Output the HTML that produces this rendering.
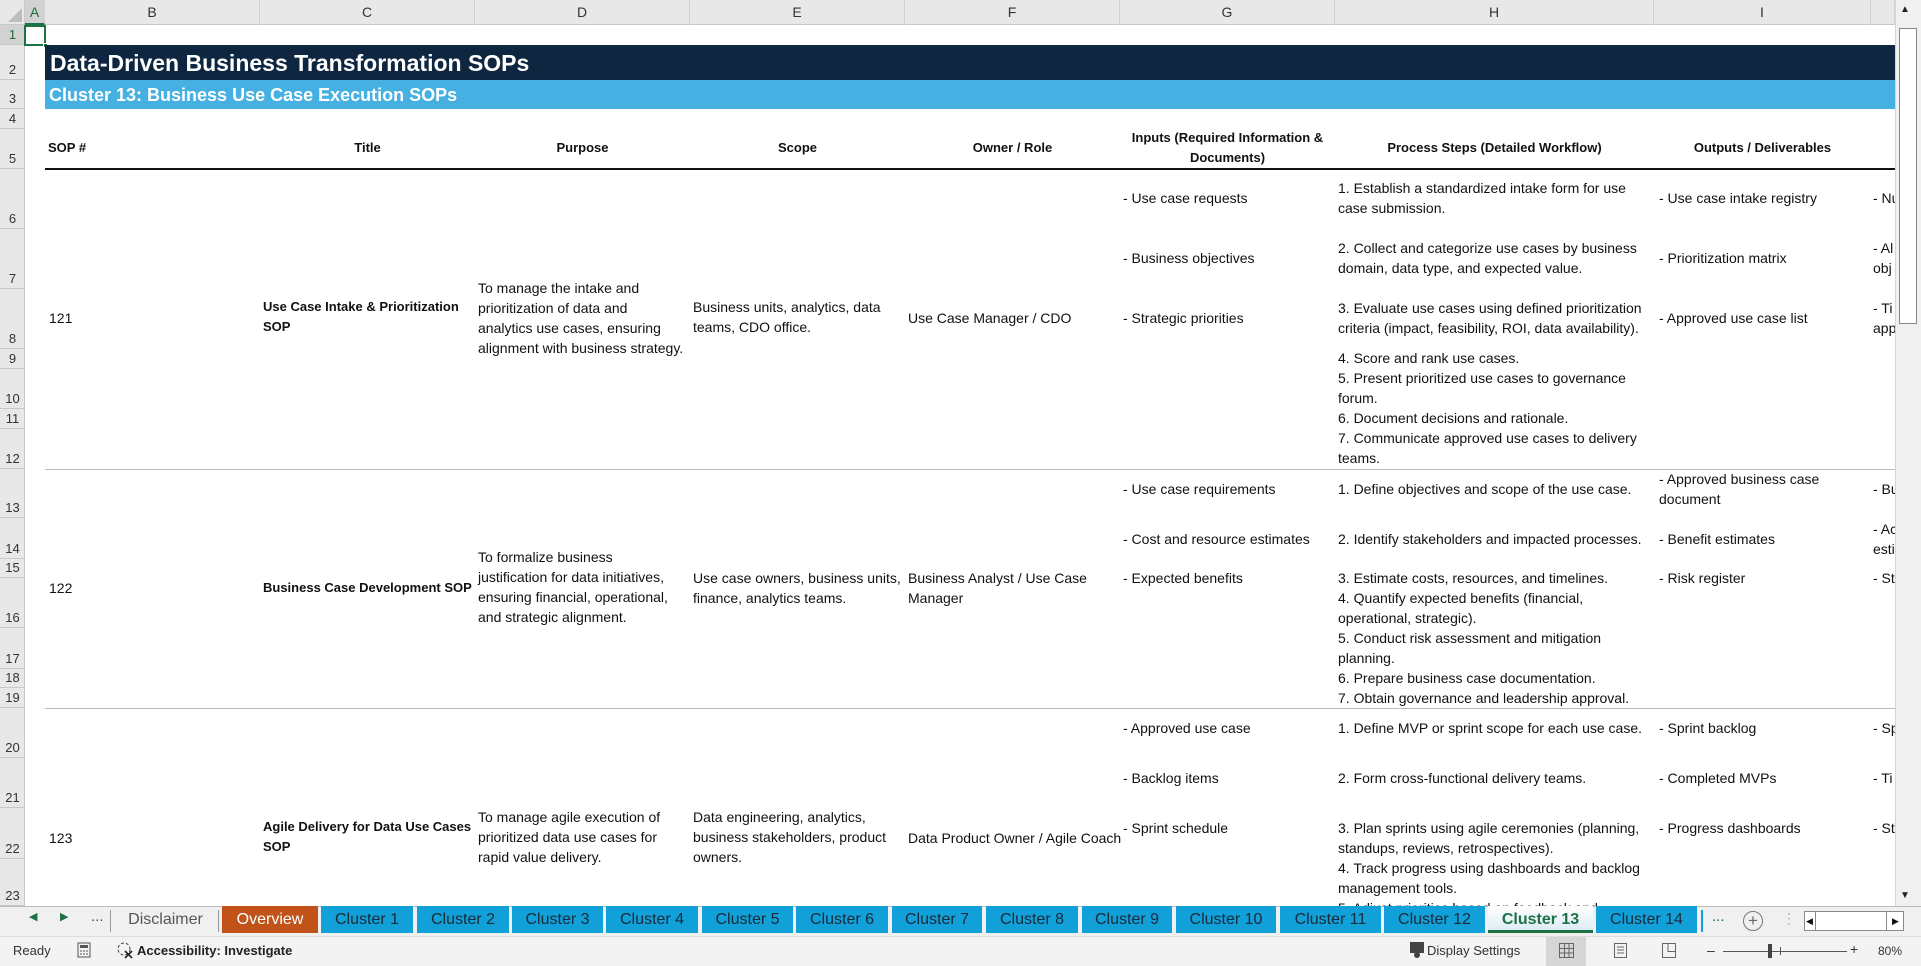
<!DOCTYPE html>
<html><head><meta charset="utf-8"><style>
*{margin:0;padding:0;box-sizing:border-box}
body{width:1921px;height:966px;overflow:hidden;background:#fff;position:relative;font-family:"Liberation Sans Narrow","Liberation Sans",sans-serif;color:#111}
.a{position:absolute;white-space:nowrap}
.t{position:absolute;white-space:nowrap;font-size:14px;line-height:20px}
.b{font-weight:bold;font-size:13px}
.ch{position:absolute;top:0;height:25px;line-height:25px;text-align:center;font-size:14px;color:#333;border-right:1px solid #d0d0d0}
.rh{position:absolute;left:0;width:25px;text-align:center;font-size:13px;color:#333;border-bottom:1px solid #c8c8c8;display:flex;align-items:flex-end;justify-content:center;padding-bottom:2px}
.hd{position:absolute;top:138px;font-weight:bold;font-size:13px;line-height:20px;text-align:center}
.tab{position:absolute;top:906px;height:27px;line-height:27px;text-align:center;font-size:16px;background:#12a0d8;color:#1b2a3a}
</style></head><body>
<div class="a" style="left:0;top:0;width:1895px;height:25px;background:#e8e8e8;border-bottom:1px solid #c8c8c8"></div>
<div class="a" style="left:0;top:0;width:25px;height:25px;border-right:1px solid #c8c8c8"></div>
<svg class="a" style="left:8px;top:8px" width="14" height="14"><polygon points="14,0 14,14 0,14" fill="#bdbdbd"/></svg>
<div class="ch" style="left:25px;width:20px;color:#1e6b3a;background:#d2d2d2;border-bottom:2px solid #1e7145">A</div>
<div class="ch" style="left:45px;width:215px">B</div>
<div class="ch" style="left:260px;width:215px">C</div>
<div class="ch" style="left:475px;width:215px">D</div>
<div class="ch" style="left:690px;width:215px">E</div>
<div class="ch" style="left:905px;width:215px">F</div>
<div class="ch" style="left:1120px;width:215px">G</div>
<div class="ch" style="left:1335px;width:319px">H</div>
<div class="ch" style="left:1654px;width:217px">I</div>
<div class="ch" style="left:1871px;width:24px"></div>
<div class="a" style="left:0;top:25px;width:25px;height:881px;background:#e8e8e8;border-right:1px solid #c8c8c8"></div>
<div class="rh" style="top:25px;height:20px;background:#d2d2d2;color:#1e6b3a">1</div>
<div class="rh" style="top:45px;height:35px">2</div>
<div class="rh" style="top:80px;height:29px">3</div>
<div class="rh" style="top:109px;height:20px">4</div>
<div class="rh" style="top:129px;height:40px">5</div>
<div class="rh" style="top:169px;height:60px">6</div>
<div class="rh" style="top:229px;height:60px">7</div>
<div class="rh" style="top:289px;height:60px">8</div>
<div class="rh" style="top:349px;height:20px">9</div>
<div class="rh" style="top:369px;height:40px">10</div>
<div class="rh" style="top:409px;height:20px">11</div>
<div class="rh" style="top:429px;height:40px">12</div>
<div class="rh" style="top:469px;height:49px">13</div>
<div class="rh" style="top:518px;height:41px">14</div>
<div class="rh" style="top:559px;height:19px">15</div>
<div class="rh" style="top:578px;height:50px">16</div>
<div class="rh" style="top:628px;height:41px">17</div>
<div class="rh" style="top:669px;height:19px">18</div>
<div class="rh" style="top:688px;height:20px">19</div>
<div class="rh" style="top:708px;height:50px">20</div>
<div class="rh" style="top:758px;height:50px">21</div>
<div class="rh" style="top:808px;height:51px">22</div>
<div class="rh" style="top:859px;height:47px">23</div>
<div class="a" style="left:24px;top:25px;width:22px;height:21px;border:2px solid #1e7145"></div>
<div class="a" style="left:43px;top:43px;width:5px;height:5px;background:#1e7145;border:1px solid #fff"></div>
<div class="a" style="left:45px;top:45px;width:1850px;height:35px;background:#0f2640"></div>
<div class="a" style="left:50px;top:48px;font-size:23px;font-weight:bold;line-height:30px;color:#fff">Data-Driven Business Transformation SOPs</div>
<div class="a" style="left:45px;top:80px;width:1850px;height:29px;background:#45b0e1"></div>
<div class="a" style="left:49px;top:83px;font-size:18px;font-weight:bold;line-height:24px;color:#fff">Cluster 13: Business Use Case Execution SOPs</div>
<div class="hd" style="left:48px;top:138px">SOP #</div>
<div class="hd" style="left:260px;width:215px">Title</div>
<div class="hd" style="left:475px;width:215px">Purpose</div>
<div class="hd" style="left:690px;width:215px">Scope</div>
<div class="hd" style="left:905px;width:215px">Owner / Role</div>
<div class="hd" style="left:1120px;width:215px;top:128px;white-space:normal">Inputs (Required Information &amp; Documents)</div>
<div class="hd" style="left:1335px;width:319px">Process Steps (Detailed Workflow)</div>
<div class="hd" style="left:1654px;width:217px">Outputs / Deliverables</div>
<div class="a" style="left:45px;top:168px;width:1850px;height:2px;background:#111"></div>
<div class="a" style="left:45px;top:469px;width:1850px;height:1px;background:#bbb"></div>
<div class="a" style="left:45px;top:708px;width:1850px;height:1px;background:#bbb"></div>
<div class="t" style="left:49px;top:308px">121</div>
<div class="t b" style="left:263px;top:297px">Use Case Intake &amp; Prioritization<br>SOP</div>
<div class="t" style="left:478px;top:278px">To manage the intake and<br>prioritization of data and<br>analytics use cases, ensuring<br>alignment with business strategy.</div>
<div class="t" style="left:693px;top:297px">Business units, analytics, data<br>teams, CDO office.</div>
<div class="t" style="left:908px;top:308px">Use Case Manager / CDO</div>
<div class="t" style="left:1123px;top:188px">- Use case requests</div>
<div class="t" style="left:1123px;top:248px">- Business objectives</div>
<div class="t" style="left:1123px;top:308px">- Strategic priorities</div>
<div class="t" style="left:1338px;top:178px">1. Establish a standardized intake form for use<br>case submission.</div>
<div class="t" style="left:1338px;top:238px">2. Collect and categorize use cases by business<br>domain, data type, and expected value.</div>
<div class="t" style="left:1338px;top:298px">3. Evaluate use cases using defined prioritization<br>criteria (impact, feasibility, ROI, data availability).</div>
<div class="t" style="left:1338px;top:348px">4. Score and rank use cases.<br>5. Present prioritized use cases to governance<br>forum.<br>6. Document decisions and rationale.<br>7. Communicate approved use cases to delivery<br>teams.</div>
<div class="t" style="left:1659px;top:188px">- Use case intake registry</div>
<div class="t" style="left:1659px;top:248px">- Prioritization matrix</div>
<div class="t" style="left:1659px;top:308px">- Approved use case list</div>
<div class="t" style="left:49px;top:578px">122</div>
<div class="t b" style="left:263px;top:578px">Business Case Development SOP</div>
<div class="t" style="left:478px;top:547px">To formalize business<br>justification for data initiatives,<br>ensuring financial, operational,<br>and strategic alignment.</div>
<div class="t" style="left:693px;top:568px">Use case owners, business units,<br>finance, analytics teams.</div>
<div class="t" style="left:908px;top:568px">Business Analyst / Use Case<br>Manager</div>
<div class="t" style="left:1123px;top:479px">- Use case requirements</div>
<div class="t" style="left:1123px;top:529px">- Cost and resource estimates</div>
<div class="t" style="left:1123px;top:568px">- Expected benefits</div>
<div class="t" style="left:1338px;top:479px">1. Define objectives and scope of the use case.</div>
<div class="t" style="left:1338px;top:529px">2. Identify stakeholders and impacted processes.</div>
<div class="t" style="left:1338px;top:568px">3. Estimate costs, resources, and timelines.<br>4. Quantify expected benefits (financial,<br>operational, strategic).<br>5. Conduct risk assessment and mitigation<br>planning.<br>6. Prepare business case documentation.<br>7. Obtain governance and leadership approval.</div>
<div class="t" style="left:1659px;top:469px">- Approved business case<br>document</div>
<div class="t" style="left:1659px;top:529px">- Benefit estimates</div>
<div class="t" style="left:1659px;top:568px">- Risk register</div>
<div class="t" style="left:49px;top:828px">123</div>
<div class="t b" style="left:263px;top:817px">Agile Delivery for Data Use Cases<br>SOP</div>
<div class="t" style="left:478px;top:807px">To manage agile execution of<br>prioritized data use cases for<br>rapid value delivery.</div>
<div class="t" style="left:693px;top:807px">Data engineering, analytics,<br>business stakeholders, product<br>owners.</div>
<div class="t" style="left:908px;top:828px">Data Product Owner / Agile Coach</div>
<div class="t" style="left:1123px;top:718px">- Approved use case</div>
<div class="t" style="left:1123px;top:768px">- Backlog items</div>
<div class="t" style="left:1123px;top:818px">- Sprint schedule</div>
<div class="t" style="left:1338px;top:718px">1. Define MVP or sprint scope for each use case.</div>
<div class="t" style="left:1338px;top:768px">2. Form cross-functional delivery teams.</div>
<div class="a" style="left:1338px;top:818px;width:320px;height:88px;overflow:hidden"><div class="t" style="left:0;top:0">3. Plan sprints using agile ceremonies (planning,<br>standups, reviews, retrospectives).<br>4. Track progress using dashboards and backlog<br>management tools.<br>5. Adjust priorities based on feedback and</div></div>
<div class="t" style="left:1659px;top:718px">- Sprint backlog</div>
<div class="t" style="left:1659px;top:768px">- Completed MVPs</div>
<div class="t" style="left:1659px;top:818px">- Progress dashboards</div>
<div class="a" style="left:1871px;top:169px;width:24px;height:737px;overflow:hidden">
<div class="t" style="left:2px;top:19px">- Nu</div>
<div class="t" style="left:2px;top:69px">- Al<br>obj</div>
<div class="t" style="left:2px;top:129px">- Ti<br>app</div>
<div class="t" style="left:2px;top:310px">- Bu</div>
<div class="t" style="left:2px;top:350px">- Ac<br>esti</div>
<div class="t" style="left:2px;top:399px">- Sta</div>
<div class="t" style="left:2px;top:549px">- Sp</div>
<div class="t" style="left:2px;top:599px">- Ti</div>
<div class="t" style="left:2px;top:649px">- Sta</div>
</div>
<div class="a" style="left:1895px;top:0;width:26px;height:906px;background:#f0f0f0;border-left:1px solid #d6d6d6"></div>
<div class="a" style="left:1899px;top:28px;width:18px;height:296px;background:#fff;border:1px solid #888"></div>
<div class="a" style="left:1900px;top:4px;font-size:10px;color:#222">▲</div>
<div class="a" style="left:1900px;top:890px;font-size:10px;color:#222">▼</div>
<div class="a" style="left:0;top:906px;width:1921px;height:30px;background:#f0f0f0;border-top:1px solid #bbb"></div>
<div class="a" style="left:29px;top:910px;font-size:11px;color:#1e7145">◀</div>
<div class="a" style="left:60px;top:910px;font-size:11px;color:#1e7145">▶</div>
<div class="a" style="left:91px;top:908px;font-size:15px;color:#1e7145">...</div>
<div class="a" style="left:110px;top:910px;width:1px;height:22px;background:#999"></div>
<div class="tab" style="left:117px;width:97px;background:transparent;color:#555">Disclaimer</div>
<div class="a" style="left:218px;top:910px;width:1px;height:22px;background:#999"></div>
<div class="tab" style="left:222px;width:96px;background:#c0521a;color:#fff">Overview</div>
<div class="tab" style="left:321px;width:92px">Cluster 1</div>
<div class="tab" style="left:417px;width:92px">Cluster 2</div>
<div class="tab" style="left:512px;width:91px">Cluster 3</div>
<div class="tab" style="left:606px;width:92px">Cluster 4</div>
<div class="tab" style="left:702px;width:91px">Cluster 5</div>
<div class="tab" style="left:796px;width:92px">Cluster 6</div>
<div class="tab" style="left:892px;width:90px">Cluster 7</div>
<div class="tab" style="left:986px;width:92px">Cluster 8</div>
<div class="tab" style="left:1082px;width:90px">Cluster 9</div>
<div class="tab" style="left:1176px;width:100px">Cluster 10</div>
<div class="tab" style="left:1280px;width:101px">Cluster 11</div>
<div class="tab" style="left:1384px;width:101px">Cluster 12</div>
<div class="tab" style="left:1488px;width:105px;font-weight:bold;background:linear-gradient(#fff,#dcecf4);color:#1e7145;border-bottom:3px solid #1e7145">Cluster 13</div>
<div class="tab" style="left:1596px;width:101px">Cluster 14</div>
<div class="a" style="left:1701px;top:910px;width:2px;height:22px;background:#12a0d8"></div>
<div class="a" style="left:1712px;top:908px;font-size:15px;color:#1e7145">...</div>
<div class="a" style="left:1743px;top:911px;width:20px;height:20px;border:1px solid #777;border-radius:50%;text-align:center;line-height:18px;font-size:17px;color:#666">+</div>
<div class="a" style="left:1782px;top:910px;font-size:14px;color:#aaa">⋮</div>
<div class="a" style="left:1804px;top:911px;width:100px;height:20px;background:#fff;border:1px solid #888"></div>
<div class="a" style="left:1804px;top:911px;width:12px;height:20px;border-right:1px solid #888;font-size:9px;line-height:20px;text-align:center">◀</div>
<div class="a" style="left:1886px;top:911px;width:18px;height:20px;border-left:1px solid #888;font-size:9px;line-height:20px;text-align:center">▶</div>
<div class="a" style="left:0;top:936px;width:1921px;height:30px;background:#f3f3f3;border-top:1px solid #ddd"></div>
<div class="a" style="left:13px;top:943px;font-size:13px;color:#333">Ready</div>
<svg class="a" style="left:77px;top:942px" width="14" height="16"><rect x="1" y="1" width="12" height="14" fill="none" stroke="#555"/><rect x="3" y="3" width="8" height="3" fill="#555"/><path d="M3 9h2M6 9h2M9 9h2M3 12h2M6 12h2M9 12h2" stroke="#555"/></svg>
<svg class="a" style="left:115px;top:941px" width="20" height="18"><circle cx="9" cy="8" r="6" fill="none" stroke="#444" stroke-dasharray="3 2"/><path d="M10 10l7 7M17 10l-7 7" stroke="#222" stroke-width="1.6"/></svg>
<div class="a" style="left:137px;top:943px;font-size:13px;font-weight:bold;color:#222">Accessibility: Investigate</div>
<svg class="a" style="left:1409px;top:941px" width="16" height="18"><rect x="1" y="1" width="14" height="11" fill="#444"/><circle cx="8" cy="14" r="3" fill="#444"/></svg>
<div class="a" style="left:1427px;top:943px;font-size:13px;color:#333">Display Settings</div>
<div class="a" style="left:1546px;top:937px;width:40px;height:29px;background:#d6d6d6"></div>
<svg class="a" style="left:1559px;top:943px" width="15" height="15"><path d="M0.5 0.5h14v14h-14zM5.5 0.5v14M10 0.5v14M0.5 5.5h14M0.5 10h14" fill="none" stroke="#666"/></svg>
<svg class="a" style="left:1614px;top:943px" width="13" height="15"><path d="M0.5 0.5h12v14h-12zM3 4h7M3 7h7M3 10h7" fill="none" stroke="#666"/></svg>
<svg class="a" style="left:1662px;top:943px" width="14" height="15"><path d="M0.5 0.5h13v14h-13zM6 0.5v8h7.5" fill="none" stroke="#666"/></svg>
<div class="a" style="left:1707px;top:942px;font-size:14px;color:#333">–</div>
<div class="a" style="left:1723px;top:951px;width:124px;height:1px;background:#555"></div>
<div class="a" style="left:1768px;top:944px;width:4px;height:14px;background:#444"></div>
<div class="a" style="left:1780px;top:947px;width:1px;height:8px;background:#555"></div>
<div class="a" style="left:1850px;top:941px;font-size:14px;color:#333">+</div>
<div class="a" style="left:1878px;top:944px;font-size:12px;color:#333">80%</div>
</body></html>
